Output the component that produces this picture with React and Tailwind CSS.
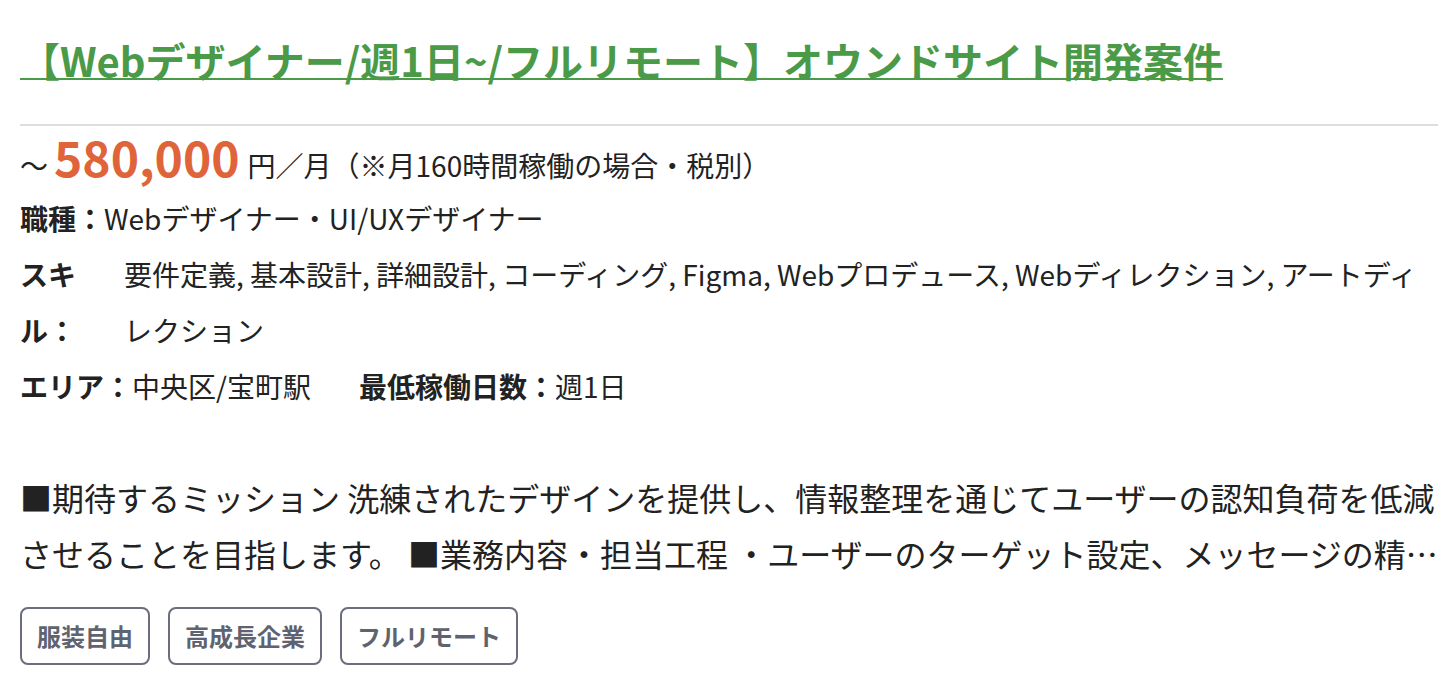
const font = { fontFamily: '"Noto Sans CJK JP", "Noto Sans", sans-serif' };

const tags = ['服装自由', '高成長企業', 'フルリモート'];

export default function App() {
  return (
    <div className="w-[1448px] h-[692px] bg-white text-[#222]" style={font}>
      <div className="pl-5 pr-[10px] pt-8">
        {/* Title */}
        <a
          href="#"
          className="block text-[40px] leading-[56px] font-bold text-[#4b9a48] underline underline-offset-[1px] decoration-2 whitespace-nowrap"
        >
          【Webデザイナー/週1日~/フルリモート】オウンドサイト開発案件
        </a>

        <div className="mt-[36px] h-[2px] bg-[#dedede]"></div>

        {/* Price */}
        <div className="flex items-baseline h-[60px] leading-[60px] whitespace-nowrap">
          <span className="text-[28px]">～</span>
          <span className="ml-[6px] text-[48px] font-bold text-[#e0643a]">580,000</span>
          <span className="ml-[8px] text-[28px]">円／月（※月160時間稼働の場合・税別）</span>
        </div>

        {/* Info rows */}
        <div className="mt-1 text-[28px] leading-[56px]">
          <div>
            <span className="font-bold">職種：</span>
            <span>Webデザイナー・UI/UXデザイナー</span>
          </div>
          <div className="flex">
            <div className="w-[104px] shrink-0 font-bold">スキル：</div>
            <div className="flex-1">
              要件定義, 基本設計, 詳細設計, コーディング, Figma, Webプロデュース, Webディレクション, アートディレクション
            </div>
          </div>
          <div className="flex gap-12">
            <div>
              <span className="font-bold">エリア：</span>
              <span>中央区/宝町駅</span>
            </div>
            <div>
              <span className="font-bold">最低稼働日数：</span>
              <span>週1日</span>
            </div>
          </div>
        </div>

        {/* Description */}
        <div className="mt-[55px] text-[32px] leading-[56px]">
          <div className="whitespace-nowrap">
            ■期待するミッション 洗練されたデザインを提供し、情報整理を通じてユーザーの認知負荷を低減
          </div>
          <div className="whitespace-nowrap overflow-hidden text-ellipsis">
            させることを目指します。 ■業務内容・担当工程 ・ユーザーのターゲット設定、メッセージの精査、情報設計
          </div>
        </div>

        {/* Tags */}
        <div className="mt-[26px] flex gap-[18px]">
          {tags.map((t) => (
            <span
              key={t}
              className="h-[58px] px-[15px] flex items-center border-2 border-[#6b6e7c] rounded-[8px] text-[24px] font-bold text-[#5f6370]"
            >
              {t}
            </span>
          ))}
        </div>
      </div>
    </div>
  );
}
